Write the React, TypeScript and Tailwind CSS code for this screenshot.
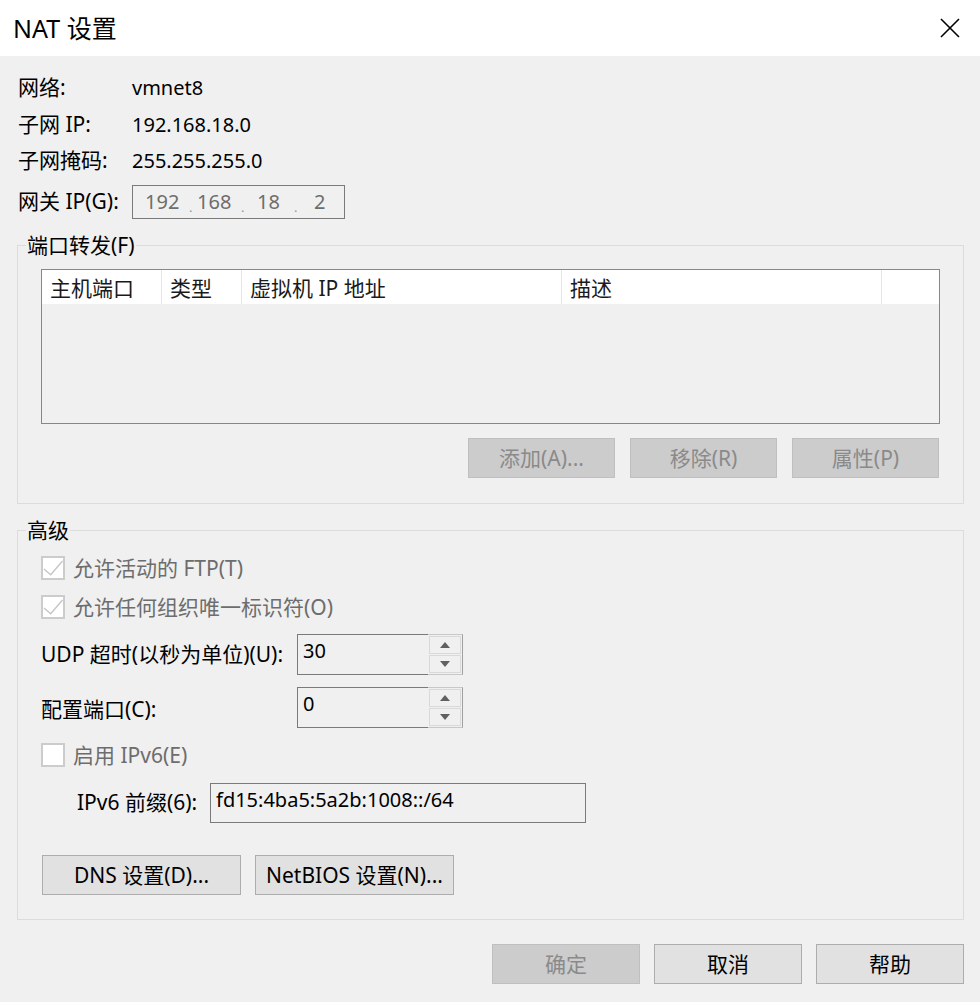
import type { ReactNode } from 'react';

const FONT = "font-['Noto_Sans','Noto_Sans_CJK_SC',sans-serif]";

function DialogButton({ label, width, disabled }: { label: string; width: string; disabled?: boolean }) {
  return (
    <button
      className={`${width} h-[40px] border text-[21px] leading-none ${
        disabled ? 'bg-[#cccccc] border-[#bfbfbf] text-[#8a8a8a]' : 'bg-[#e1e1e1] border-[#adadad] text-black'
      }`}
    >
      {label}
    </button>
  );
}

function GroupBox({ title, className, children }: { title: string; className: string; children: ReactNode }) {
  return (
    <div className={`relative border border-[#dcdcdc] px-[23px] ${className}`}>
      <span className="absolute left-[8px] top-[-14px] bg-[#f0f0f0] px-[1px] text-[21px] leading-[26px] text-black">
        {title}
      </span>
      {children}
    </div>
  );
}

function CheckBox({ checked, label }: { checked?: boolean; label: string }) {
  return (
    <div className="flex h-[24px] items-center">
      <span className="relative h-[24px] w-[24px] shrink-0 border-2 border-[#cccccc] bg-white">
        {checked && (
          <svg className="absolute left-[-2px] top-[-2px]" width="24" height="24" viewBox="0 0 24 24">
            <path d="M3 13 L9.7 18.7 L21.5 5" fill="none" stroke="#c6c6c6" strokeWidth="1.4" />
          </svg>
        )}
      </span>
      <span className="ml-[8px] text-[21px] leading-none text-[#6d6d6d]">{label}</span>
    </div>
  );
}

function Spinner({ value }: { value: string }) {
  return (
    <div className="flex h-[41px] w-[166px]">
      <div className="flex-1 border border-r-0 border-[#7a7a7a] pl-[5px] pt-[3px] text-[20px] leading-[26px] text-black">
        {value}
      </div>
      <div className="flex w-[35px] flex-col gap-[1px] border-y border-r border-y-[#c8c8c8] border-r-[#a0a0a0] p-[1px]">
        <div className="flex flex-1 items-center justify-center border border-[#d9d9d9]">
          <svg width="10" height="6" viewBox="0 0 10 6">
            <path d="M0 6 L5 0 L10 6 Z" fill="#606060" />
          </svg>
        </div>
        <div className="flex flex-1 items-center justify-center border border-[#d9d9d9]">
          <svg width="10" height="6" viewBox="0 0 10 6">
            <path d="M0 0 L10 0 L5 6 Z" fill="#606060" />
          </svg>
        </div>
      </div>
    </div>
  );
}

const infoRows = [
  { label: '网络:', value: 'vmnet8', gap: 'mt-[15px]' },
  { label: '子网 IP:', value: '192.168.18.0', gap: 'mt-[3px]' },
  { label: '子网掩码:', value: '255.255.255.0', gap: 'mt-[2px]' },
];

const columns = [
  { title: '主机端口', width: 'w-[120px]' },
  { title: '类型', width: 'w-[80px]' },
  { title: '虚拟机 IP 地址', width: 'w-[320px]' },
  { title: '描述', width: 'w-[320px]' },
];

export default function App() {
  return (
    <div className={`flex h-[1002px] w-[980px] flex-col bg-[#f0f0f0] text-black ${FONT}`}>
      {/* title bar */}
      <div className="flex h-[56px] shrink-0 items-center justify-between bg-white pl-[13px] pr-[20px]">
        <span className="text-[25px] leading-none">NAT 设置</span>
        <svg width="20" height="20" viewBox="0 0 20 20">
          <path d="M1 1 L19 19 M19 1 L1 19" stroke="#000" strokeWidth="1.6" />
        </svg>
      </div>

      <div className="flex flex-col pl-[17px] pr-[16px]">
        {infoRows.map((row) => (
          <div key={row.label} className={`flex h-[34px] items-center pl-[1px] text-[20px] ${row.gap}`}>
            <span className="w-[114px] text-[21px]">{row.label}</span>
            <span>{row.value}</span>
          </div>
        ))}
        <div className="mt-[7px] flex h-[34px] items-center pl-[1px] text-[20px]">
          <span className="w-[114px] text-[21px]">网关 IP(G):</span>
          <div className="flex h-[34px] w-[213px] items-center border border-[#7a7a7a] pl-[12px] text-[#6d6d6d]">
            <span className="w-[44px]">192</span>
            <span className="w-[8px] self-end pb-[4px] text-[13px] leading-none text-[#9a9a9a]">.</span>
            <span className="w-[44px]">168</span>
            <span className="w-[16px] self-end pb-[4px] text-[13px] leading-none text-[#9a9a9a]">.</span>
            <span className="w-[37px]">18</span>
            <span className="w-[20px] self-end pb-[4px] text-[13px] leading-none text-[#9a9a9a]">.</span>
            <span>2</span>
          </div>
        </div>

        {/* port forwarding */}
        <GroupBox title="端口转发(F)" className="mt-[26px] pb-[25px] pt-[23px]">
          <div className="flex h-[155px] flex-col border border-[#828790]">
            <div className="flex h-[34px] bg-white text-[21px]">
              {columns.map((c) => (
                <div
                  key={c.title}
                  className={`${c.width} flex items-center border-r border-[#e5e5e5] pl-[8px] pt-[4px] text-[#1a1a1a]`}
                >
                  {c.title}
                </div>
              ))}
              <div className="flex-1" />
            </div>
          </div>
          <div className="mt-[14px] flex justify-end gap-[15px] pr-[1px]">
            <DialogButton label="添加(A)..." width="w-[147px]" disabled />
            <DialogButton label="移除(R)" width="w-[147px]" disabled />
            <DialogButton label="属性(P)" width="w-[147px]" disabled />
          </div>
        </GroupBox>

        {/* advanced */}
        <GroupBox title="高级" className="mt-[26px] pb-[24px] pt-[25px]">
          <CheckBox checked label="允许活动的 FTP(T)" />
          <div className="mt-[15px]">
            <CheckBox checked label="允许任何组织唯一标识符(O)" />
          </div>
          <div className="mt-[15px] flex items-center text-[21px]">
            <span className="w-[256px]">UDP 超时(以秒为单位)(U):</span>
            <Spinner value="30" />
          </div>
          <div className="mt-[12px] flex items-center text-[21px]">
            <span className="w-[256px] pt-[4px]">配置端口(C):</span>
            <Spinner value="0" />
          </div>
          <div className="mt-[15px]">
            <CheckBox label="启用 IPv6(E)" />
          </div>
          <div className="mt-[16px] flex items-center">
            <span className="ml-[36px] w-[133px] text-[21px]">IPv6 前缀(6):</span>
            <div className="h-[40px] w-[376px] border border-[#7a7a7a] pl-[5px] pt-[3px] text-[20px] leading-[26px]">
              fd15:4ba5:5a2b:1008::/64
            </div>
          </div>
          <div className="mt-[32px] flex gap-[14px] pl-[1px]">
            <DialogButton label="DNS 设置(D)..." width="w-[199px]" />
            <DialogButton label="NetBIOS 设置(N)..." width="w-[199px]" />
          </div>
        </GroupBox>

        <div className="mt-[24px] flex justify-end gap-[14px]">
          <DialogButton label="确定" width="w-[148px]" disabled />
          <DialogButton label="取消" width="w-[148px]" />
          <DialogButton label="帮助" width="w-[148px]" />
        </div>
      </div>
    </div>
  );
}
